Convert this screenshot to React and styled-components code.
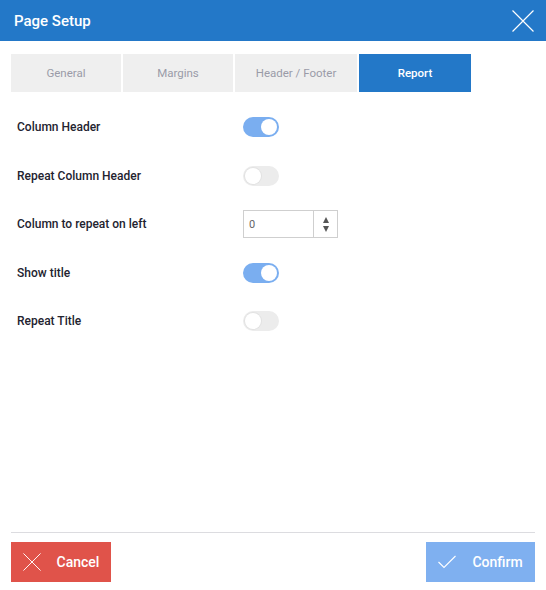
import React, { useState } from "react"
import styled, { createGlobalStyle } from "styled-components"

const GlobalStyle = createGlobalStyle`
  html, body {
    margin: 0;
    padding: 0;
    background: #fff;
  }
  body {
    font-family: Roboto, "Noto Sans", "Liberation Sans", sans-serif;
  }
`

const Dialog = styled.div`
  width: 546px;
  height: 590px;
  display: flex;
  flex-direction: column;
  background: #fff;
`

const TitleBar = styled.div`
  height: 41px;
  background: #2378c8;
  display: flex;
  align-items: center;
  justify-content: space-between;
  padding: 0 11px 0 14px;
  color: #fff;
`

const Title = styled.h1`
  margin: 0;
  font-size: 15px;
  font-weight: 500;
`

const CloseButton = styled.button`
  width: 24px;
  height: 24px;
  padding: 0;
  border: 0;
  background: none;
  display: flex;
  align-items: center;
  justify-content: center;
  cursor: pointer;
`

const Tabs = styled.div`
  display: flex;
  gap: 2px;
  margin: 13px 11px 0;
`

const Tab = styled.button`
  width: ${p => p.$w}px;
  height: 38px;
  border: 0;
  font-family: inherit;
  font-size: 11.5px;
  font-weight: ${p => (p.$active ? 500 : 400)};
  background: ${p => (p.$active ? "#2378c8" : "#efefef")};
  color: ${p => (p.$active ? "#fff" : "#9a9ba8")};
  cursor: pointer;
`

const Body = styled.div`
  flex: 1;
  padding: 11px 17px 0;
  display: flex;
  flex-direction: column;
`

const Row = styled.div`
  height: 48.5px;
  display: flex;
  align-items: center;
`

const Label = styled.span`
  width: 226px;
  font-size: 12px;
  font-weight: 500;
  color: #23232f;
`

const SwitchTrack = styled.button`
  width: 36px;
  height: 20px;
  border-radius: 10px;
  border: 0;
  padding: 2px;
  display: flex;
  justify-content: ${p => (p.$on ? "flex-end" : "flex-start")};
  background: ${p => (p.$on ? "#7aaef0" : "#ececec")};
  cursor: pointer;
`

const SwitchKnob = styled.span`
  width: 16px;
  height: 16px;
  border-radius: 50%;
  background: #fff;
  box-shadow: ${p => (p.$on ? "none" : "0 0 0 1px #e2e2e2")};
`

const Spinner = styled.div`
  width: 93px;
  height: 26px;
  border: 1px solid #cfcfcf;
  display: flex;
`

const SpinnerInput = styled.input`
  width: 70px;
  border: 0;
  border-right: 1px solid #cfcfcf;
  padding: 0 5px;
  font-family: inherit;
  font-size: 11px;
  color: #666;
  outline: none;
  box-sizing: border-box;
`

const SpinnerArrows = styled.div`
  flex: 1;
  display: flex;
  flex-direction: column;
  align-items: center;
  justify-content: center;
  gap: 3px;
`

const Arrow = styled.span`
  width: 0;
  height: 0;
  border-left: 3.5px solid transparent;
  border-right: 3.5px solid transparent;
  ${p => (p.$up ? "border-bottom: 6px solid #555;" : "border-top: 6px solid #555;")}
`

const Footer = styled.div`
  margin: 0 11px;
  border-top: 1px solid #dcdce0;
  padding: 9px 0 8px;
  display: flex;
  justify-content: space-between;
`

const ActionButton = styled.button`
  width: ${p => p.$w}px;
  height: 40px;
  border: 0;
  display: flex;
  align-items: center;
  justify-content: center;
  gap: 16px;
  background: ${p => p.$bg};
  color: #fff;
  font-family: inherit;
  font-size: 14px;
  font-weight: 500;
  cursor: pointer;
`

const XIcon = ({ size = 21 }) => (
  <svg width={size} height={size} viewBox="0 0 21 21" fill="none">
    <path d="M0.5 0.5 L20.5 20.5 M20.5 0.5 L0.5 20.5" stroke="#fff" strokeWidth="1.1" />
  </svg>
)

const CheckIcon = () => (
  <svg width="18" height="14" viewBox="0 0 18 14" fill="none">
    <path d="M0.5 7 L6 12.5 L17.5 1" stroke="#fff" strokeWidth="1.1" />
  </svg>
)

function Switch({ on, onChange }) {
  return (
    <SwitchTrack $on={on} onClick={onChange}>
      <SwitchKnob $on={on} />
    </SwitchTrack>
  )
}

const tabs = [
  { name: "General", w: 110 },
  { name: "Margins", w: 110 },
  { name: "Header / Footer", w: 122 },
  { name: "Report", w: 112 },
]

export default function App() {
  const [active, setActive] = useState("Report")
  const [opts, setOpts] = useState({
    columnHeader: true,
    repeatColumnHeader: false,
    showTitle: true,
    repeatTitle: false,
  })
  const [repeatLeft, setRepeatLeft] = useState(0)

  const toggle = key => setOpts(o => ({ ...o, [key]: !o[key] }))

  return (
    <Dialog>
      <GlobalStyle />
      <TitleBar>
        <Title>Page Setup</Title>
        <CloseButton>
          <XIcon size={22} />
        </CloseButton>
      </TitleBar>

      <Tabs>
        {tabs.map(t => (
          <Tab key={t.name} $w={t.w} $active={active === t.name} onClick={() => setActive(t.name)}>
            {t.name}
          </Tab>
        ))}
      </Tabs>

      <Body>
        <Row>
          <Label>Column Header</Label>
          <Switch on={opts.columnHeader} onChange={() => toggle("columnHeader")} />
        </Row>
        <Row>
          <Label>Repeat Column Header</Label>
          <Switch on={opts.repeatColumnHeader} onChange={() => toggle("repeatColumnHeader")} />
        </Row>
        <Row>
          <Label>Column to repeat on left</Label>
          <Spinner>
            <SpinnerInput value={repeatLeft} onChange={e => setRepeatLeft(e.target.value)} />
            <SpinnerArrows>
              <Arrow $up onClick={() => setRepeatLeft(v => Number(v) + 1)} />
              <Arrow onClick={() => setRepeatLeft(v => Math.max(0, Number(v) - 1))} />
            </SpinnerArrows>
          </Spinner>
        </Row>
        <Row>
          <Label>Show title</Label>
          <Switch on={opts.showTitle} onChange={() => toggle("showTitle")} />
        </Row>
        <Row>
          <Label>Repeat Title</Label>
          <Switch on={opts.repeatTitle} onChange={() => toggle("repeatTitle")} />
        </Row>
      </Body>

      <Footer>
        <ActionButton $w={100} $bg="#e0534a">
          <XIcon size={18} />
          Cancel
        </ActionButton>
        <ActionButton $w={109} $bg="#7fb0f0">
          <CheckIcon />
          Confirm
        </ActionButton>
      </Footer>
    </Dialog>
  )
}
